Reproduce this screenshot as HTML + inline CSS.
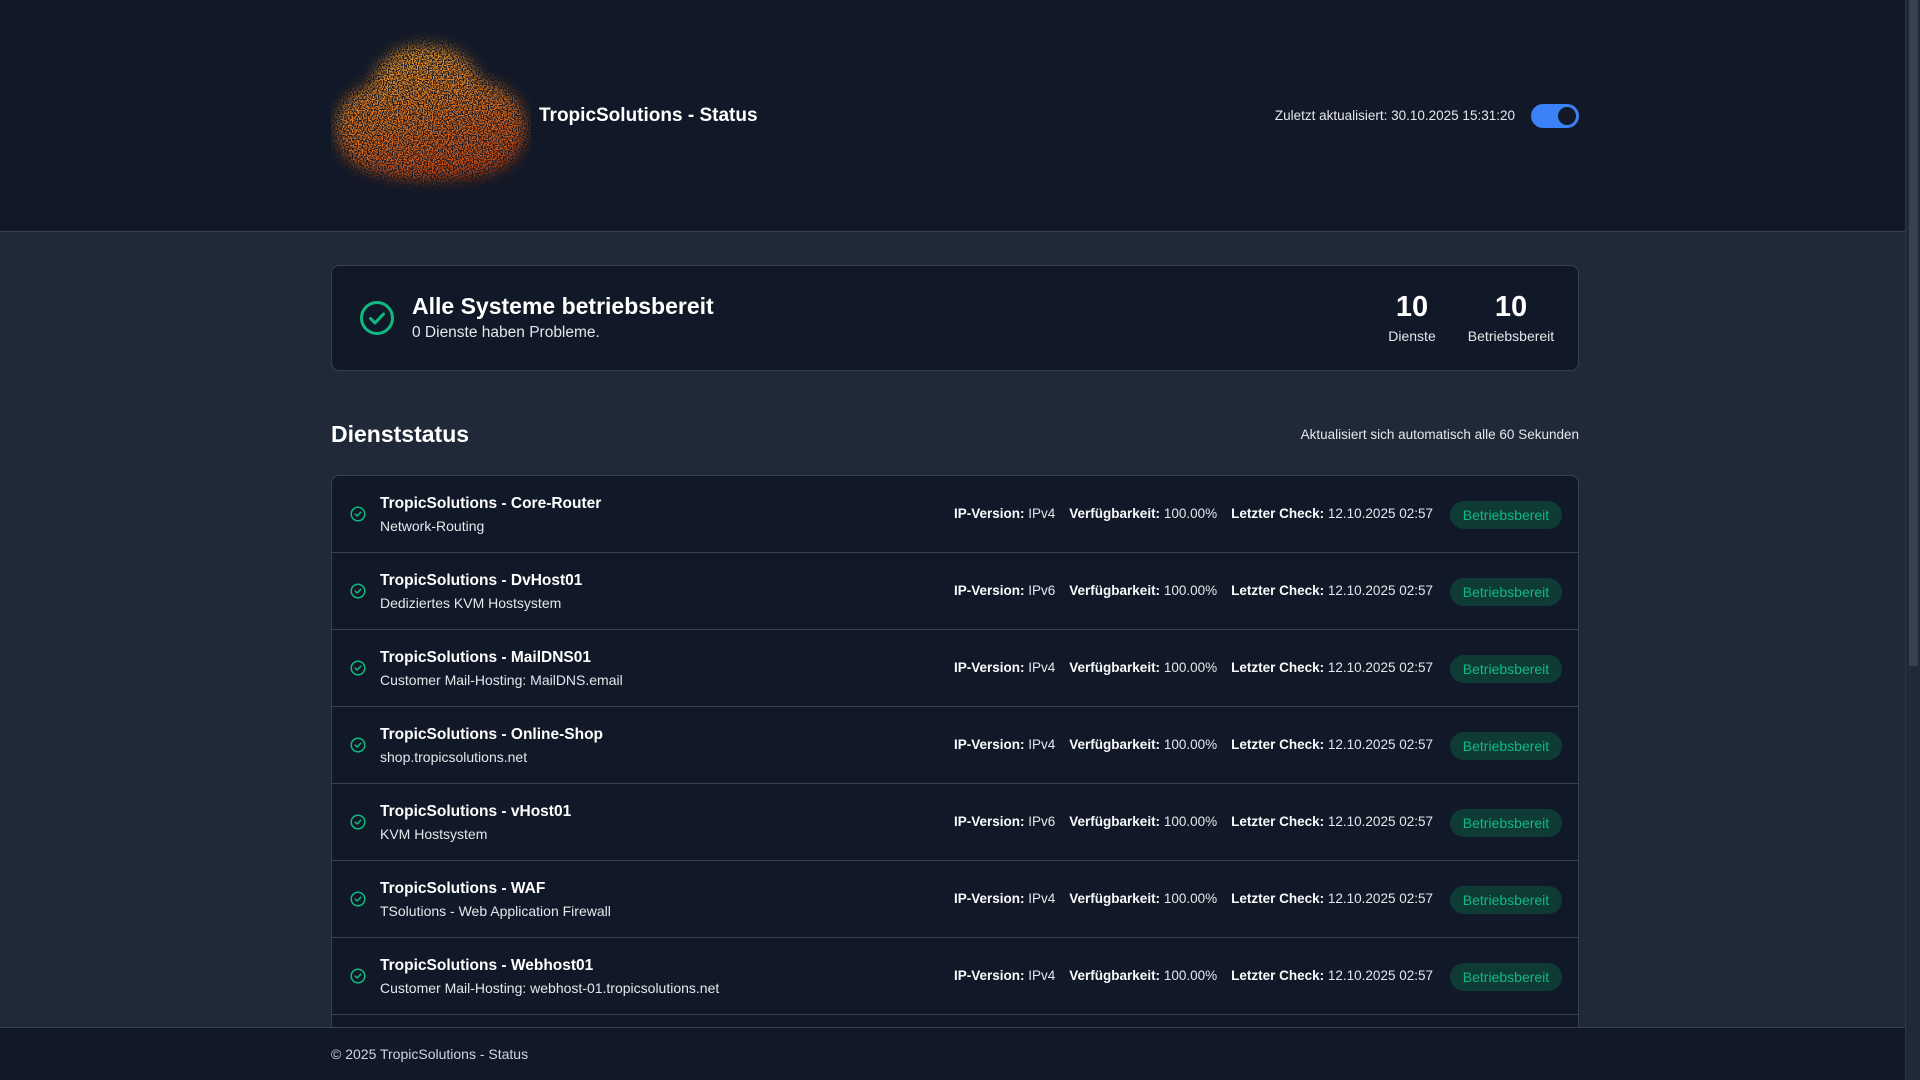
<!DOCTYPE html>
<html><head><meta charset="utf-8"><style>
*{box-sizing:border-box;margin:0;padding:0}
html,body{width:1920px;height:1080px;overflow:hidden;background:#1f2937;font-family:"Liberation Sans",sans-serif;color:#f3f4f6;position:relative}
.sb{position:absolute;right:0;top:0;width:15px;height:1080px;background:#1f2937;border-left:1px solid #2b3544}
.sb div{position:absolute;left:3px;top:0;width:9px;height:666px;background:#374151}
header{position:absolute;left:0;top:0;width:1905px;height:232px;background:#111827;border-bottom:1px solid #374151}
.logo{position:absolute;left:331px;top:28px;width:200px;height:170px}
.title{position:absolute;left:539px;top:105px;font-size:19px;font-weight:bold;color:#fff}
.upd{position:absolute;right:390px;top:108px;font-size:13.5px;color:#e5e7eb}
.tog{position:absolute;left:1531px;top:104px;width:48px;height:24px;border-radius:12px;background:#3b82f6}
.tog:after{content:"";position:absolute;right:3px;top:3px;width:18px;height:18px;border-radius:50%;background:#111827}
.card{position:absolute;left:331px;width:1248px;background:#111827;border:1px solid #374151;border-radius:8px}
.sum{top:265px;height:106px}
.sum svg{position:absolute;left:27px;top:34px}
.sum h1{position:absolute;left:80px;top:27px;font-size:23px;font-weight:bold;color:#fff}
.sum p{position:absolute;left:80px;top:58px;font-size:15.5px;color:#e5e7eb}
.st{position:absolute;top:25px;text-align:center;transform:translateX(-50%)}
.st b{display:block;font-size:29px;color:#fff}
.st span{display:block;font-size:14px;color:#e5e7eb;margin-top:4px}
h2{position:absolute;left:331px;top:421px;font-size:23px;font-weight:bold;color:#fff}
.auto{position:absolute;right:341px;top:427px;font-size:13.5px;color:#e5e7eb}
.list{top:475px;height:605px;overflow:hidden;border-bottom:none;border-radius:8px 8px 0 0}
.row{position:relative;height:77px;border-bottom:1px solid #374151}
.row svg{position:absolute;left:18px;top:30px}
.nm{position:absolute;left:48px;top:19px;font-size:15.5px;font-weight:bold;color:#fff}
.ds{position:absolute;left:48px;top:42px;font-size:14px;color:#e5e7eb}
.meta{position:absolute;right:145px;top:30px;font-size:13.5px;color:#e5e7eb;white-space:nowrap}
.meta b{color:#f9fafb}
.meta i{font-style:normal;margin-right:14px}
.bd{position:absolute;right:16px;top:25px;width:112px;height:28px;border-radius:14px;background:#0f3b36;color:#10b981;font-size:14px;text-align:center;line-height:28px}
footer{position:absolute;left:0;top:1027px;width:1905px;height:53px;background:#111827;border-top:1px solid #374151}
footer p{position:absolute;left:331px;top:18px;font-size:14px;color:#d1d5db}
</style></head><body>
<header>
<svg class="logo" viewBox="0 0 200 170">
<defs>
<linearGradient id="g" x1="0" y1="0" x2="0.3" y2="1"><stop offset="0" stop-color="#f9b02a"/><stop offset="0.5" stop-color="#ee7f1c"/><stop offset="1" stop-color="#d9460c"/></linearGradient>
<filter id="bl" x="-20%" y="-20%" width="140%" height="140%"><feGaussianBlur stdDeviation="7"/></filter>
<filter id="n" x="0" y="0" width="100%" height="100%"><feTurbulence type="fractalNoise" baseFrequency="0.8" numOctaves="1" seed="3" result="t"/><feColorMatrix in="t" type="matrix" values="0 0 0 0 0 0 0 0 0 0 0 0 0 0 0 7 0 0 0 -3" result="a"/><feComposite in="SourceGraphic" in2="a" operator="in"/></filter>
<mask id="m"><g fill="#fff" filter="url(#bl)"><ellipse cx="95" cy="62" rx="55" ry="45"/><ellipse cx="55" cy="100" rx="50" ry="45"/><ellipse cx="140" cy="100" rx="55" ry="48"/><ellipse cx="100" cy="120" rx="88" ry="32"/></g></mask>
</defs>
<g filter="url(#n)"><rect width="200" height="170" fill="url(#g)" mask="url(#m)"/></g>
</svg>
<div class="title">TropicSolutions - Status</div>
<div class="upd">Zuletzt aktualisiert: 30.10.2025 15:31:20</div>
<div class="tog"></div>
</header>
<div class="card sum">
<svg width="36" height="36" viewBox="0 0 36 36"><circle cx="18" cy="18" r="15.5" fill="none" stroke="#10b981" stroke-width="3"/><path d="M11.5 18.5l4.5 4.5 8.5-9" fill="none" stroke="#10b981" stroke-width="3" stroke-linecap="round" stroke-linejoin="round"/></svg>
<h1>Alle Systeme betriebsbereit</h1>
<p>0 Dienste haben Probleme.</p>
<div class="st" style="left:1080px"><b>10</b><span>Dienste</span></div>
<div class="st" style="left:1179px"><b>10</b><span>Betriebsbereit</span></div>
</div>
<h2>Dienststatus</h2>
<div class="auto">Aktualisiert sich automatisch alle 60 Sekunden</div>
<div class="card list">
<div class="row"><svg width="16" height="16" viewBox="0 0 16 16"><circle cx="8" cy="8" r="6.8" fill="none" stroke="#10b981" stroke-width="1.5"/><path d="M5.3 8.2l1.8 1.8 3.6-3.7" fill="none" stroke="#10b981" stroke-width="1.5" stroke-linecap="round" stroke-linejoin="round"/></svg><div class="nm">TropicSolutions - Core-Router</div><div class="ds">Network-Routing</div><div class="meta"><i><b>IP-Version:</b> IPv4</i><i><b>Verfügbarkeit:</b> 100.00%</i><b>Letzter Check:</b> 12.10.2025 02:57</div><div class="bd">Betriebsbereit</div></div>
<div class="row"><svg width="16" height="16" viewBox="0 0 16 16"><circle cx="8" cy="8" r="6.8" fill="none" stroke="#10b981" stroke-width="1.5"/><path d="M5.3 8.2l1.8 1.8 3.6-3.7" fill="none" stroke="#10b981" stroke-width="1.5" stroke-linecap="round" stroke-linejoin="round"/></svg><div class="nm">TropicSolutions - DvHost01</div><div class="ds">Dediziertes KVM Hostsystem</div><div class="meta"><i><b>IP-Version:</b> IPv6</i><i><b>Verfügbarkeit:</b> 100.00%</i><b>Letzter Check:</b> 12.10.2025 02:57</div><div class="bd">Betriebsbereit</div></div>
<div class="row"><svg width="16" height="16" viewBox="0 0 16 16"><circle cx="8" cy="8" r="6.8" fill="none" stroke="#10b981" stroke-width="1.5"/><path d="M5.3 8.2l1.8 1.8 3.6-3.7" fill="none" stroke="#10b981" stroke-width="1.5" stroke-linecap="round" stroke-linejoin="round"/></svg><div class="nm">TropicSolutions - MailDNS01</div><div class="ds">Customer Mail-Hosting: MailDNS.email</div><div class="meta"><i><b>IP-Version:</b> IPv4</i><i><b>Verfügbarkeit:</b> 100.00%</i><b>Letzter Check:</b> 12.10.2025 02:57</div><div class="bd">Betriebsbereit</div></div>
<div class="row"><svg width="16" height="16" viewBox="0 0 16 16"><circle cx="8" cy="8" r="6.8" fill="none" stroke="#10b981" stroke-width="1.5"/><path d="M5.3 8.2l1.8 1.8 3.6-3.7" fill="none" stroke="#10b981" stroke-width="1.5" stroke-linecap="round" stroke-linejoin="round"/></svg><div class="nm">TropicSolutions - Online-Shop</div><div class="ds">shop.tropicsolutions.net</div><div class="meta"><i><b>IP-Version:</b> IPv4</i><i><b>Verfügbarkeit:</b> 100.00%</i><b>Letzter Check:</b> 12.10.2025 02:57</div><div class="bd">Betriebsbereit</div></div>
<div class="row"><svg width="16" height="16" viewBox="0 0 16 16"><circle cx="8" cy="8" r="6.8" fill="none" stroke="#10b981" stroke-width="1.5"/><path d="M5.3 8.2l1.8 1.8 3.6-3.7" fill="none" stroke="#10b981" stroke-width="1.5" stroke-linecap="round" stroke-linejoin="round"/></svg><div class="nm">TropicSolutions - vHost01</div><div class="ds">KVM Hostsystem</div><div class="meta"><i><b>IP-Version:</b> IPv6</i><i><b>Verfügbarkeit:</b> 100.00%</i><b>Letzter Check:</b> 12.10.2025 02:57</div><div class="bd">Betriebsbereit</div></div>
<div class="row"><svg width="16" height="16" viewBox="0 0 16 16"><circle cx="8" cy="8" r="6.8" fill="none" stroke="#10b981" stroke-width="1.5"/><path d="M5.3 8.2l1.8 1.8 3.6-3.7" fill="none" stroke="#10b981" stroke-width="1.5" stroke-linecap="round" stroke-linejoin="round"/></svg><div class="nm">TropicSolutions - WAF</div><div class="ds">TSolutions - Web Application Firewall</div><div class="meta"><i><b>IP-Version:</b> IPv4</i><i><b>Verfügbarkeit:</b> 100.00%</i><b>Letzter Check:</b> 12.10.2025 02:57</div><div class="bd">Betriebsbereit</div></div>
<div class="row"><svg width="16" height="16" viewBox="0 0 16 16"><circle cx="8" cy="8" r="6.8" fill="none" stroke="#10b981" stroke-width="1.5"/><path d="M5.3 8.2l1.8 1.8 3.6-3.7" fill="none" stroke="#10b981" stroke-width="1.5" stroke-linecap="round" stroke-linejoin="round"/></svg><div class="nm">TropicSolutions - Webhost01</div><div class="ds">Customer Mail-Hosting: webhost-01.tropicsolutions.net</div><div class="meta"><i><b>IP-Version:</b> IPv4</i><i><b>Verfügbarkeit:</b> 100.00%</i><b>Letzter Check:</b> 12.10.2025 02:57</div><div class="bd">Betriebsbereit</div></div>
</div>
<footer><p>© 2025 TropicSolutions - Status</p></footer>
<div class="sb"><div></div></div>
</body></html>
